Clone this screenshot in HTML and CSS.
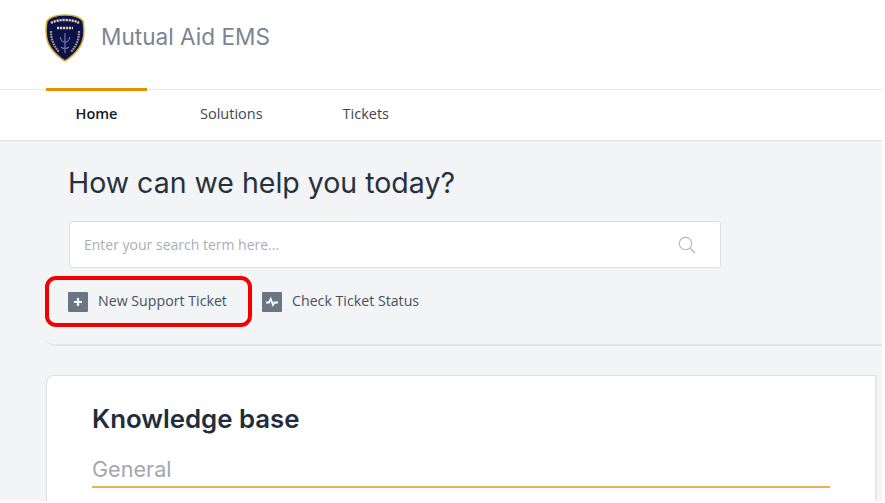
FILE: index.html
```html
<!DOCTYPE html>
<html lang="en">
<head>
<meta charset="utf-8">
<title>Mutual Aid EMS</title>
<link rel="stylesheet" href="styles.css">
</head>
<body>
<div class="page">
  <header class="brand">
    <svg class="logo" width="42" height="48" viewBox="0 0 42 48" aria-hidden="true">
      <path d="M3 7 C6 3 13 1 21 1 C29 1 36 3 39 7 C41 18 40 27 35 34 C31 40 26 44 21 47 C16 44 11 40 7 34 C2 27 1 18 3 7Z" fill="#0e1048" stroke="#d3ad3a" stroke-width="1.500"/>
      <path d="M7 9 C13 5 29 5 35 9 M13 14 H29" fill="none" stroke="#d9d6b8" stroke-width="2.400" stroke-dasharray="2.200 .8"/>
      <path d="M7 17 C7 25 9 31 15 38 M35 17 C35 25 33 31 27 38" fill="none" stroke="#a09d83" stroke-width="2.200" stroke-dasharray="1.800 .8"/>
      <path d="M21 19 V39 M16.500 23 C16.500 30 25.500 30 25.500 23 M17 33 C19 35 23 35 25 33" fill="none" stroke="#7478a6" stroke-width="1.200"/>
    </svg>
    <span class="brand-name">Mutual Aid EMS</span>
  </header>
  <nav class="tabs">
    <a class="tab tab-active">Home</a>
    <a class="tab">Solutions</a>
    <a class="tab">Tickets</a>
  </nav>
  <section class="hero">
    <h1 class="hero-title">How can we help you today?</h1>
    <div class="search">
      <span class="search-text">Enter your search term here...</span>
      <svg class="search-icon" width="18" height="18" viewBox="0 0 18 18" aria-hidden="true">
        <circle cx="7.500" cy="7.500" r="6.200" fill="none" stroke="#b4bac2" stroke-width="1.200"/>
        <path d="M12 12 L17 17" stroke="#b4bac2" stroke-width="1.200"/>
      </svg>
    </div>
    <div class="actions">
      <a class="action action-marked">
        <span class="action-icon">
          <svg width="12" height="12" viewBox="0 0 12 12" aria-hidden="true"><path d="M6 2 V10 M2 6 H10" stroke="#fff" stroke-width="2.200"/></svg>
        </span>
        <span class="action-label">New Support Ticket</span>
      </a>
      <a class="action">
        <span class="action-icon">
          <svg width="14" height="12" viewBox="0 0 14 12" aria-hidden="true"><path d="M1 6.500 H4 L5.800 3 L8 9 L9.500 6.500 H13" fill="none" stroke="#fff" stroke-width="1.800"/></svg>
        </span>
        <span class="action-label">Check Ticket Status</span>
      </a>
    </div>
  </section>
  <main class="card">
    <h2 class="card-title">Knowledge base</h2>
    <h3 class="card-sub">General</h3>
  </main>
</div>
</body>
</html>
```
FILE: styles.css
```css
html, body { margin: 0; padding: 0; background: #fff; }
body { width: 885px; height: 503px; overflow: hidden; font-family: "Open Sans", "Noto Sans", sans-serif; }
.page { width: 882px; height: 501px; background: #f3f4f6; overflow: hidden; }
.brand { height: 89px; background: #fff; display: flex; align-items: flex-start; box-sizing: border-box; padding: 14px 0 0 44px; }
.logo { flex: none; }
.brand-name { margin: 7px 0 0 15px; font-family: "Inter", sans-serif; font-size: 22.6px; line-height: 32px; color: #7a8592; white-space: nowrap; }
.tabs { height: 52px; box-sizing: border-box; background: #fff; border-top: 1px solid #e8e9ec; border-bottom: 1px solid #dfe1e5; display: flex; padding-left: 46px; }
.tab { width: 101px; margin-top: -2px; height: 48px; box-sizing: border-box; display: flex; align-items: center; justify-content: center; font-size: 14.5px; color: #3f4650; border-top: 3px solid transparent; }
.tab + .tab { width: auto; margin-left: 53px; margin-right: 27px; }
.tab + .tab + .tab { margin-left: 53px; }
.tab-active { border-top-color: #e58e00; font-weight: 600; color: #15191e; }
.hero { margin-left: 46px; height: 205px; box-sizing: border-box; border-bottom: 2px solid #e3e5e8; border-bottom-left-radius: 8px; padding: 24px 0 0 22px; }
.hero-title { margin: 0; font-family: "Inter", sans-serif; font-weight: 400; font-size: 28.5px; line-height: 36px; color: #27313d; white-space: nowrap; }
.search { margin: 20px 0 0 1px; width: 652px; height: 47px; box-sizing: border-box; background: #fff; border: 1px solid #dcdfe4; border-radius: 3px; display: flex; align-items: center; justify-content: space-between; padding: 0 24px 0 14px; }
.search-text { font-size: 14px; color: #a9afb7; }
.actions { display: flex; align-items: center; margin: 8px 0 0 -23px; }
.action { display: flex; align-items: center; gap: 10px; padding: 0; font-size: 14.2px; color: #47505b; white-space: nowrap; }
.action-label { margin-top: -2px; }
.action + .action { margin-left: 10px; }
.action-marked { box-sizing: border-box; width: 207px; height: 51px; border: 4px solid #f40000; border-radius: 11px; padding-left: 19px; }
.action-icon { width: 20px; height: 20px; background: #6b7685; border-radius: 1px; display: flex; align-items: center; justify-content: center; flex: none; }
.card { margin: 29px 5px 0 46px; height: 140px; box-sizing: border-box; background: #fff; border: 1px solid #dfe1e5; border-right: 2px solid #e3e5e8; border-bottom: 0; border-radius: 8px 0 0 0; padding: 25px 45px 0 45px; }
.card-title { margin: 0; font-family: "Inter", sans-serif; font-size: 25.8px; line-height: 36px; font-weight: 600; color: #1f2d3d; white-space: nowrap; }
.card-sub { margin: 15px 0 0; height: 36px; box-sizing: border-box; border-bottom: 2px solid #ebb04d; font-family: "Inter", sans-serif; font-size: 21.6px; line-height: 34px; font-weight: 400; color: #a2a8b0; }
```
